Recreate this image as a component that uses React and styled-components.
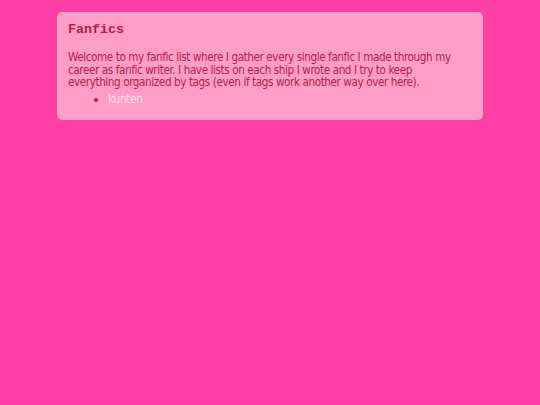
import React from 'react'
import styled, { createGlobalStyle } from 'styled-components'

const GlobalStyle = createGlobalStyle`
  html, body {
    margin: 0;
    padding: 0;
    background: #ff3ea5;
  }
  body {
    font-family: "DejaVu Sans Condensed", "DejaVu Sans", sans-serif;
  }
`

export default function App() {
  return (
    <Page>
      <GlobalStyle />
      <Card>
        <Title>Fanfics</Title>
        <Intro>
          Welcome to my fanfic list where I gather every single fanfic I made through my
          career as fanfic writer. I have lists on each ship I wrote and I try to keep
          everything organized by tags (even if tags work another way over here).
        </Intro>
        <ShipList>
          <Ship><ShipLink href="#">kunten</ShipLink></Ship>
        </ShipList>
      </Card>
    </Page>
  )
}

/***************************** Styled Components *****************************/

const Page = styled.div`
  min-height: 405px;
  padding-top: 12px;
  box-sizing: border-box;
`

const Card = styled.div`
  width: 426px;
  margin: 0 auto;
  box-sizing: border-box;
  padding: 10px 11px 14px 11px;
  background: #ff9ec4;
  border-radius: 5px;
  color: #b31d4b;
`

const Title = styled.h2`
  margin: 0 0 13px 0;
  font-family: "Liberation Mono", monospace;
  font-weight: bold;
  font-size: 13.3px;
  line-height: 16px;
`

const Intro = styled.p`
  margin: 0;
  max-width: 394px;
  font-size: 11.6px;
  line-height: 12.5px;
  letter-spacing: -0.4px;
`

const ShipList = styled.ul`
  margin: 3px 0 0 0;
  padding-left: 40px;
  font-size: 11.6px;
  line-height: 14px;
  letter-spacing: -0.2px;
`

const Ship = styled.li`
  &::marker {
    color: #b31d4b;
  }
`

const ShipLink = styled.a`
  color: #ffe0ef;
  text-decoration: none;
`
